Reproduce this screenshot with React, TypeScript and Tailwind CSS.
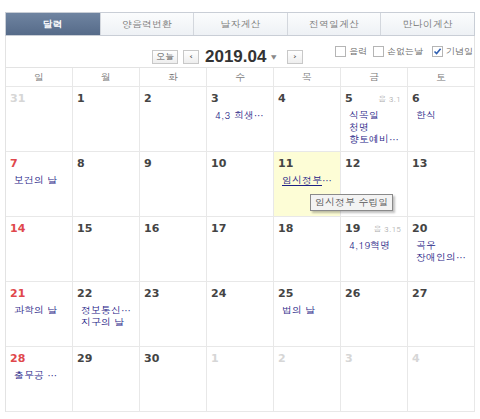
import React from "react";

type Day = {
  n: number;
  kind?: "sun" | "other";
  lunar?: string;
  events?: string[];
  today?: boolean;
  tip?: string;
};

const TABS = ["달력", "양음력변환", "날자계산", "전역일계산", "만나이계산"];
const WEEK = ["일", "월", "화", "수", "목", "금", "토"];

const WEEKS: Day[][] = [
  [
    { n: 31, kind: "other" },
    { n: 1 },
    { n: 2 },
    { n: 3, events: ["4,3 희생…"] },
    { n: 4 },
    { n: 5, lunar: "음 3.1", events: ["식목일", "청명", "향토예비…"] },
    { n: 6, events: ["한식"] },
  ],
  [
    { n: 7, kind: "sun", events: ["보건의 날"] },
    { n: 8 },
    { n: 9 },
    { n: 10 },
    { n: 11, today: true, tip: "임시정부 수립일" },
    { n: 12 },
    { n: 13 },
  ],
  [
    { n: 14, kind: "sun" },
    { n: 15 },
    { n: 16 },
    { n: 17 },
    { n: 18 },
    { n: 19, lunar: "음 3.15", events: ["4,19혁명"] },
    { n: 20, events: ["곡우", "장애인의…"] },
  ],
  [
    { n: 21, kind: "sun", events: ["과학의 날"] },
    { n: 22, events: ["정보통신…", "지구의 날"] },
    { n: 23 },
    { n: 24 },
    { n: 25, events: ["법의 날"] },
    { n: 26 },
    { n: 27 },
  ],
  [
    { n: 28, kind: "sun", events: ["출무공 …"] },
    { n: 29 },
    { n: 30 },
    { n: 1, kind: "other" },
    { n: 2, kind: "other" },
    { n: 3, kind: "other" },
    { n: 4, kind: "other" },
  ],
];

const ko = "font-['Dotum','Noto_Sans_CJK_KR',sans-serif]";

function Check({ checked, label }: { checked?: boolean; label: string }) {
  return (
    <label className="flex items-center gap-[3px] whitespace-nowrap">
      <span className="flex h-[11px] w-[11px] items-center justify-center border border-[#b5b5b5] bg-white">
        {checked ? (
          <svg width="9" height="9" viewBox="0 0 9 9">
            <path d="M1.5 4.5 L3.6 6.6 L7.6 1.8" fill="none" stroke="#2f5fb0" strokeWidth="1.6" />
          </svg>
        ) : null}
      </span>
      <span className="text-[9px] text-[#666]">{label}</span>
    </label>
  );
}

function Cell({ d }: { d: Day }) {
  const numColor =
    d.kind === "sun" ? "text-[#e0474c]" : d.kind === "other" ? "text-[#d6d6d6]" : "text-[#444]";
  return (
    <div
      className={`relative h-[65px] border-r border-b border-[#e8e8e8] px-[4px] pt-[4px] ${
        d.today ? "bg-[#fdfdd6]" : "bg-white"
      }`}
    >
      <div className="flex items-center justify-between">
        <span className={`font-['DejaVu_Sans',sans-serif] text-[11px] font-bold ${numColor}`}>{d.n}</span>
        {d.lunar ? (
          <span className={`${ko} pr-[2px] text-[8px] whitespace-nowrap text-[#aaa]`}>{d.lunar}</span>
        ) : null}
      </div>
      {d.events ? (
        <div className={`${ko} mt-[1px] whitespace-nowrap pl-[4px] text-[10px] text-[#1c2185]`}>
          {d.events.map((e) => (
            <div key={e} className="h-[12px] leading-[12px]">
              {e}
            </div>
          ))}
        </div>
      ) : null}
      {d.tip ? (
        <>
          <div className={`${ko} mt-[1px] whitespace-nowrap pl-[4px] text-[10px] leading-[12px] text-[#1c2185]`}>
            <span className="underline">임시정부</span>…
          </div>
          <div
            className={`${ko} absolute left-[36px] top-[42px] z-10 whitespace-nowrap border border-[#8a8a8a] bg-[#f3f3f3] px-[4px] py-[1px] text-[10px] leading-[13px] text-[#555] shadow-[2px_2px_2px_rgba(0,0,0,0.25)]`}
          >
            {d.tip}
          </div>
        </>
      ) : null}
    </div>
  );
}

export default function App() {
  return (
    <div className={`h-[419px] w-[480px] bg-white px-[5px] pt-[12px] ${ko}`}>
      <div className="grid grid-cols-5 border border-[#c9ced6]">
        {TABS.map((t, i) => (
          <div
            key={t}
            className={`flex h-[22px] items-center justify-center text-[10px] ${
              i === 0
                ? "bg-gradient-to-b from-[#6f84a1] to-[#566b89] font-bold text-white"
                : "border-l border-[#d3d7dd] bg-gradient-to-b from-[#fbfcfd] to-[#eef1f5] text-[#777]"
            }`}
          >
            {t}
          </div>
        ))}
      </div>

      <div className="relative flex h-[31px] items-center border-x border-[#e3e3e3]">
        <div className="absolute left-[146px] top-[8px] flex items-center">
          <span className="flex h-[14px] items-center border border-[#c8c8c8] bg-gradient-to-b from-white to-[#eee] px-[3px] text-[9px] text-[#555]">
            오늘
          </span>
          <span className="ml-[5px] flex h-[14px] w-[16px] items-center justify-center border border-[#c8c8c8] bg-gradient-to-b from-white to-[#eee] text-[10px] text-[#555]">
            ‹
          </span>
          <span className="ml-[6px] font-['Liberation_Sans',sans-serif] text-[17px] font-bold text-[#333]">
            2019.04
          </span>
          <span className="ml-[4px] text-[7px] text-[#888]">▼</span>
          <span className="ml-[10px] flex h-[14px] w-[16px] items-center justify-center border border-[#c8c8c8] bg-gradient-to-b from-white to-[#eee] text-[10px] text-[#555]">
            ›
          </span>
        </div>
        <div className="absolute left-[329px] top-[9px] flex items-center gap-[6px]">
          <Check label="음력" />
          <Check label="손없는날" />
          <span className="ml-[3px]">
            <Check checked label="기념일" />
          </span>
        </div>
      </div>

      <div className="grid grid-cols-7 border-l border-t border-[#e3e3e3]">
        {WEEK.map((w) => (
          <div
            key={w}
            className="flex h-[19px] items-center justify-center border-r border-b border-[#e8e8e8] text-[10px] text-[#777]"
          >
            {w}
          </div>
        ))}
        {WEEKS.flat().map((d, i) => (
          <Cell key={i} d={d} />
        ))}
      </div>
    </div>
  );
}
